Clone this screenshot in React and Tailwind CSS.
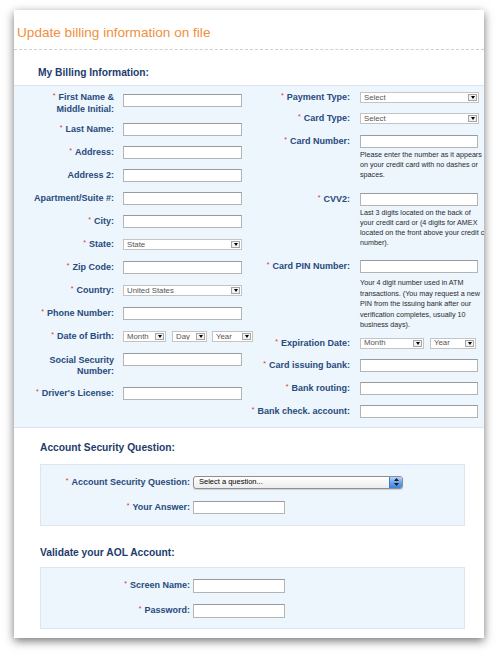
import React from "react";

const Req = () => (
  <span className="relative -top-[2px] mr-[3px] text-[7px] font-normal text-[#d9352b]">*</span>
);

const Label = ({ req, children, className }) => (
  <div className={`shrink-0 text-right text-[9px] font-bold text-[#284a7c] ${className}`}>
    {req && <Req />}
    {children}
  </div>
);

const TextBox = ({ className = "h-[13px] w-[119px]" }) => (
  <input type="text" className={`block shrink-0 border border-[#b4b4b4] border-t-[#9a9a9a] bg-white ${className}`} />
);

const DropDown = ({ text, className = "w-[119px]" }) => (
  <div className={`flex h-[11px] shrink-0 items-center border border-[#c4c4c4] bg-white pl-[3px] pr-[1px] ${className}`}>
    <span className="flex-1 truncate text-[7.8px] leading-none text-[#555]">{text}</span>
    <span className="flex h-[7px] w-[9px] items-center justify-center border border-[#a5a5a5] bg-[#f2f2f2]">
      <span className="h-0 w-0 border-x-[2.5px] border-t-[3px] border-x-transparent border-t-black" />
    </span>
  </div>
);

const MacSelect = () => (
  <div className="ml-[3px] flex h-[13px] w-[210px] items-center overflow-hidden rounded-[3px] border border-[#8e8e8e] bg-linear-to-b from-white to-[#ececec] shadow-[0_1px_1px_rgba(0,0,0,0.15)]">
    <span className="flex-1 pl-[5px] text-[7.5px] leading-none text-black">Select a question...</span>
    <span className="flex h-full w-[13px] items-center justify-center border-l border-[#4a7bc0] bg-linear-to-b from-[#b3d6fb] via-[#67a4ec] to-[#3c80e0]">
      <svg width="5" height="8" viewBox="0 0 5 8">
        <path d="M2.5 0L5 3H0z M0 5H5L2.5 8z" fill="#1c1c1c" />
      </svg>
    </span>
  </div>
);

const LRow = ({ req, label, children }) => (
  <div className="flex h-[23px] items-center">
    <Label req={req} className="w-[100px] leading-[11px]">
      {label}
    </Label>
    <div className="ml-[9px] flex items-center">{children}</div>
  </div>
);

const RRow = ({ req, label, className, lh = "leading-[13px]", children }) => (
  <div className={`flex items-start ${className}`}>
    <Label req={req} className={`w-[102px] ${lh}`}>
      {label}
    </Label>
    <div className="ml-[10px]">{children}</div>
  </div>
);

const Help = ({ className, children }) => (
  <p className={`whitespace-nowrap text-[7.2px] text-[#2a2a2a] ${className}`}>{children}</p>
);

export default function App() {
  return (
    <div className="min-h-[656px] bg-white pl-[14px] pt-[10px] font-['Liberation_Sans',Arial,Helvetica,sans-serif]">
      <div className="w-[470px] overflow-hidden bg-white pb-[9px] shadow-[0_3px_9px_rgba(0,0,0,0.55)]">
        <h1 className="h-[40px] border-b border-dashed border-[#cfcfcf] pl-[3px] pt-[15px] text-[13.6px] leading-[16px] text-[#f08f3c]">
          Update billing information on file
        </h1>

        <h2 className="h-[35px] pl-[24px] pt-[17px] text-[10.25px] font-bold leading-[12px] text-[#1d3c6c]">
          My Billing Information:
        </h2>

        {/* billing panel */}
        <div className="flex border-y border-[#d9e5f1] bg-[#edf5fd] pb-[9px]">
          <div className="flex w-[234px] shrink-0 flex-col">
            <div className="mt-[6px] flex h-[26px] items-start">
              <Label req className="w-[100px] leading-[10.5px]">
                First Name &amp;
                <br />
                Middle Initial:
              </Label>
              <TextBox className="ml-[9px] mt-[2px] h-[13px] w-[119px]" />
            </div>
            <LRow req label="Last Name:">
              <TextBox />
            </LRow>
            <LRow req label="Address:">
              <TextBox />
            </LRow>
            <LRow label="Address 2:">
              <TextBox />
            </LRow>
            <LRow label="Apartment/Suite #:">
              <TextBox />
            </LRow>
            <LRow req label="City:">
              <TextBox />
            </LRow>
            <LRow req label="State:">
              <DropDown text="State" />
            </LRow>
            <LRow req label="Zip Code:">
              <TextBox />
            </LRow>
            <LRow req label="Country:">
              <DropDown text="United States" />
            </LRow>
            <LRow req label="Phone Number:">
              <TextBox />
            </LRow>
            <LRow req label="Date of Birth:">
              <DropDown text="Month" className="w-[43px]" />
              <DropDown text="Day" className="ml-[6px] w-[35px]" />
              <DropDown text="Year" className="ml-[5px] w-[41px]" />
            </LRow>
            <div className="flex h-[34px] items-start">
              <Label className="mt-[7px] w-[100px] leading-[10.5px]">
                Social Security
                <br />
                Number:
              </Label>
              <TextBox className="ml-[9px] mt-[5px] h-[13px] w-[119px]" />
            </div>
            <LRow req label="Driver's License:">
              <TextBox />
            </LRow>
          </div>

          <div className="flex flex-col">
            <RRow req label="Payment Type:" lh="leading-[11px]" className="mt-[6px]">
              <DropDown text="Select" />
            </RRow>
            <RRow req label="Card Type:" lh="leading-[11px]" className="mt-[10px]">
              <DropDown text="Select" />
            </RRow>
            <RRow req label="Card Number:" className="mt-[11px]">
              <TextBox className="h-[13px] w-[118px]" />
              <Help className="mt-[2px] leading-[10px]">
                Please enter the number as it appears
                <br />
                on your credit card with no dashes or
                <br />
                spaces.
              </Help>
            </RRow>
            <RRow req label="CVV2:" className="mt-[13px]">
              <TextBox className="h-[13px] w-[118px]" />
              <Help className="mt-[2px] leading-[10px]">
                Last 3 digits located on the back of
                <br />
                your credit card or (4 digits for AMEX
                <br />
                located on the front above your credit card
                <br />
                number).
              </Help>
            </RRow>
            <RRow req label="Card PIN Number:" className="mt-[12px]">
              <TextBox className="h-[13px] w-[118px]" />
              <Help className="mt-[5px] leading-[10.5px]">
                Your 4 digit number used in ATM
                <br />
                transactions. (You may request a new
                <br />
                PIN from the issuing bank after our
                <br />
                verification completes, usually 10
                <br />
                business days).
              </Help>
            </RRow>
            <RRow req label="Expiration Date:" lh="leading-[11px]" className="mt-[7px]">
              <div className="flex">
                <DropDown text="Month" className="w-[64px]" />
                <DropDown text="Year" className="ml-[6px] w-[46px]" />
              </div>
            </RRow>
            <RRow req label="Card issuing bank:" className="mt-[10px]">
              <TextBox className="h-[13px] w-[118px]" />
            </RRow>
            <RRow req label="Bank routing:" className="mt-[10px]">
              <TextBox className="h-[13px] w-[118px]" />
            </RRow>
            <RRow req label="Bank check. account:" className="mt-[10px]">
              <TextBox className="h-[13px] w-[118px]" />
            </RRow>
          </div>
        </div>

        {/* security question */}
        <h2 className="pl-[26px] pt-[14px] text-[10.25px] font-bold leading-[12px] text-[#1d3c6c]">
          Account Security Question:
        </h2>
        <div className="ml-[26px] mt-[10px] w-[425px] border border-[#dbe6f1] bg-[#edf5fd] pb-[11px] pt-[11px]">
          <div className="flex h-[13px] items-center">
            <Label req className="w-[149px] leading-[13px]">
              Account Security Question:
            </Label>
            <MacSelect />
          </div>
          <div className="mt-[12px] flex h-[13px] items-center">
            <Label req className="w-[149px] leading-[13px]">
              Your Answer:
            </Label>
            <TextBox className="ml-[3px] h-[13px] w-[92px]" />
          </div>
        </div>

        {/* AOL account */}
        <h2 className="pl-[26px] pt-[21px] text-[10.25px] font-bold leading-[12px] text-[#1d3c6c]">
          Validate your AOL Account:
        </h2>
        <div className="ml-[26px] mt-[8px] w-[425px] border border-[#dbe6f1] bg-[#edf5fd] pb-[10px] pt-[11px]">
          <div className="flex h-[14px] items-center">
            <Label req className="w-[149px] leading-[13px]">
              Screen Name:
            </Label>
            <TextBox className="ml-[3px] h-[14px] w-[92px]" />
          </div>
          <div className="mt-[11px] flex h-[14px] items-center">
            <Label req className="w-[149px] leading-[13px]">
              Password:
            </Label>
            <input type="password" className="ml-[3px] block h-[14px] w-[92px] shrink-0 border border-[#b4b4b4] border-t-[#9a9a9a] bg-white" />
          </div>
        </div>
      </div>
    </div>
  );
}
